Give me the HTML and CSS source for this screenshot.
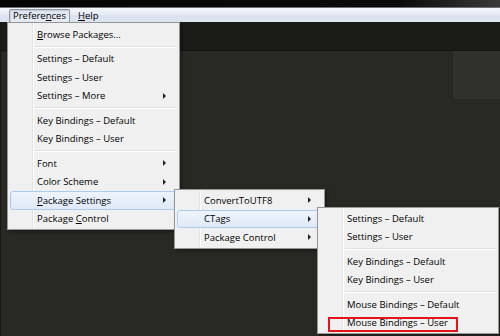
FILE: index.html
```html
<!DOCTYPE html>
<html lang="en">
<head>
    <meta charset="UTF-8">
    <meta name="viewport" content="width=device-width, initial-scale=1.0">
    <title>Preferences menu</title>
    <link rel="stylesheet" href="styles.css">
</head>
<body>
    <div class="window">
        <div class="titlebar"></div>
        <div class="menubar">
            <span class="menubar-item open">Prefere<u>n</u>ces</span>
            <span class="menubar-item"><u>H</u>elp</span>
        </div>
        <div class="workspace">
            <div class="tabs"></div>
            <div class="editor">
                <div class="minimap"></div>
            </div>
        </div>
    </div>

    <!-- Preferences dropdown -->
    <div class="menu main-menu">
        <div class="item"><span><u>B</u>rowse Packages...</span></div>
        <div class="sep"></div>
        <div class="item"><span>Settings – Default</span></div>
        <div class="item"><span>Settings – User</span></div>
        <div class="item has-sub"><span>Settings – More</span></div>
        <div class="sep"></div>
        <div class="item"><span>Key Bindings – Default</span></div>
        <div class="item"><span>Key Bindings – User</span></div>
        <div class="sep"></div>
        <div class="item has-sub"><span>Font</span></div>
        <div class="item has-sub"><span>Color Scheme</span></div>
        <div class="item has-sub active"><span><u>P</u>ackage Settings</span></div>
        <div class="item"><span>Package <u>C</u>ontrol</span></div>
    </div>

    <!-- Package Settings submenu -->
    <div class="menu package-menu">
        <div class="item has-sub"><span>ConvertToUTF8</span></div>
        <div class="item has-sub active"><span>CTags</span></div>
        <div class="item has-sub"><span>Package Control</span></div>
    </div>

    <!-- CTags submenu -->
    <div class="menu ctags-menu">
        <div class="item"><span>Settings – Default</span></div>
        <div class="item"><span>Settings – User</span></div>
        <div class="sep"></div>
        <div class="item"><span>Key Bindings – Default</span></div>
        <div class="item"><span>Key Bindings – User</span></div>
        <div class="sep"></div>
        <div class="item"><span>Mouse Bindings – Default</span></div>
        <div class="item"><span>Mouse Bindings – User</span></div>
    </div>

    <div class="callout"></div>
</body>
</html>
```

FILE: styles.css
```css
body {
    margin: 0;
    width: 500px;
    height: 336px;
    overflow: hidden;
    font-family: 'Open Sans', 'Noto Sans', sans-serif;
    font-size: 9.5px;
    color: #000;
    background: #272822;
}

u {
    text-decoration: underline;
    text-underline-offset: 1px;
}

.window {
    display: flex;
    flex-direction: column;
    height: 336px;
}

.titlebar {
    height: 7px;
    background: linear-gradient(to right, #050505 0%, #0b0b0b 80%, #3a3a3a 100%);
    border-bottom: 1px solid #6b6f76;
}

.menubar {
    height: 14px;
    display: flex;
    align-items: flex-end;
    gap: 4px;
    padding-left: 9px;
    background: linear-gradient(#f3f6fb, #e6ebf5 45%, #d9e1ef 55%, #dfe6f2);
}

.menubar-item {
    height: 12px;
    line-height: 11px;
    padding: 0 3px;
    border: 1px solid transparent;
    border-bottom: 0;
}

.menubar-item.open {
    border-color: #8d98ab;
    border-radius: 2px 2px 0 0;
    background: linear-gradient(#dfe5ef, #e8edf5);
    box-shadow: inset 1px 1px 1px rgba(0,0,0,0.12);
}

.workspace {
    flex: 1;
    display: flex;
    flex-direction: column;
    border-left: 1px solid #151512;
}

.tabs {
    height: 28px;
    background: #1b1c17;
    border-bottom: 1px solid #141510;
}

.editor {
    flex: 1;
    display: flex;
    justify-content: flex-end;
    align-items: flex-start;
    background: #282923;
}

.minimap {
    width: 47px;
    height: 48px;
    background: #30312b;
}

/* menus */

.menu {
    position: absolute;
    box-sizing: border-box;
    padding: 1px 2px;
    background: #f0f0f0;
    border: 1px solid #979797;
    box-shadow: 2px 2px 3px rgba(0,0,0,0.35);
}

.menu::before {
    content: "";
    position: absolute;
    top: 1px;
    bottom: 1px;
    left: 24px;
    width: 1px;
    background: #e2e3e3;
    box-shadow: 1px 0 0 #fff;
}

.main-menu {
    left: 7px;
    top: 22px;
    width: 173px;
    padding-top: 2px;
}

.package-menu {
    left: 174px;
    top: 189px;
    width: 151px;
}

.ctags-menu {
    left: 317px;
    top: 207px;
    width: 182px;
}

.item {
    position: relative;
    box-sizing: border-box;
    height: 18.5px;
    display: flex;
    align-items: center;
    padding-left: 26px;
    border: 1px solid transparent;
    border-radius: 3px;
    white-space: nowrap;
}

.item.active {
    border-color: #aecbee;
    background: linear-gradient(#eef4fc, #dfe9f7);
}

.has-sub::after {
    content: "";
    position: absolute;
    right: 10px;
    top: 50%;
    margin-top: -3px;
    border-left: 3px solid #222;
    border-top: 3px solid transparent;
    border-bottom: 3px solid transparent;
}

.sep {
    height: 1px;
    margin: 2px 0 2px 25px;
    background: #e0e0e0;
    border-bottom: 1px solid #fff;
}

.callout {
    position: absolute;
    left: 328px;
    top: 317px;
    width: 130px;
    height: 15px;
    box-sizing: border-box;
    border: 2px solid #e5141c;
}
```
